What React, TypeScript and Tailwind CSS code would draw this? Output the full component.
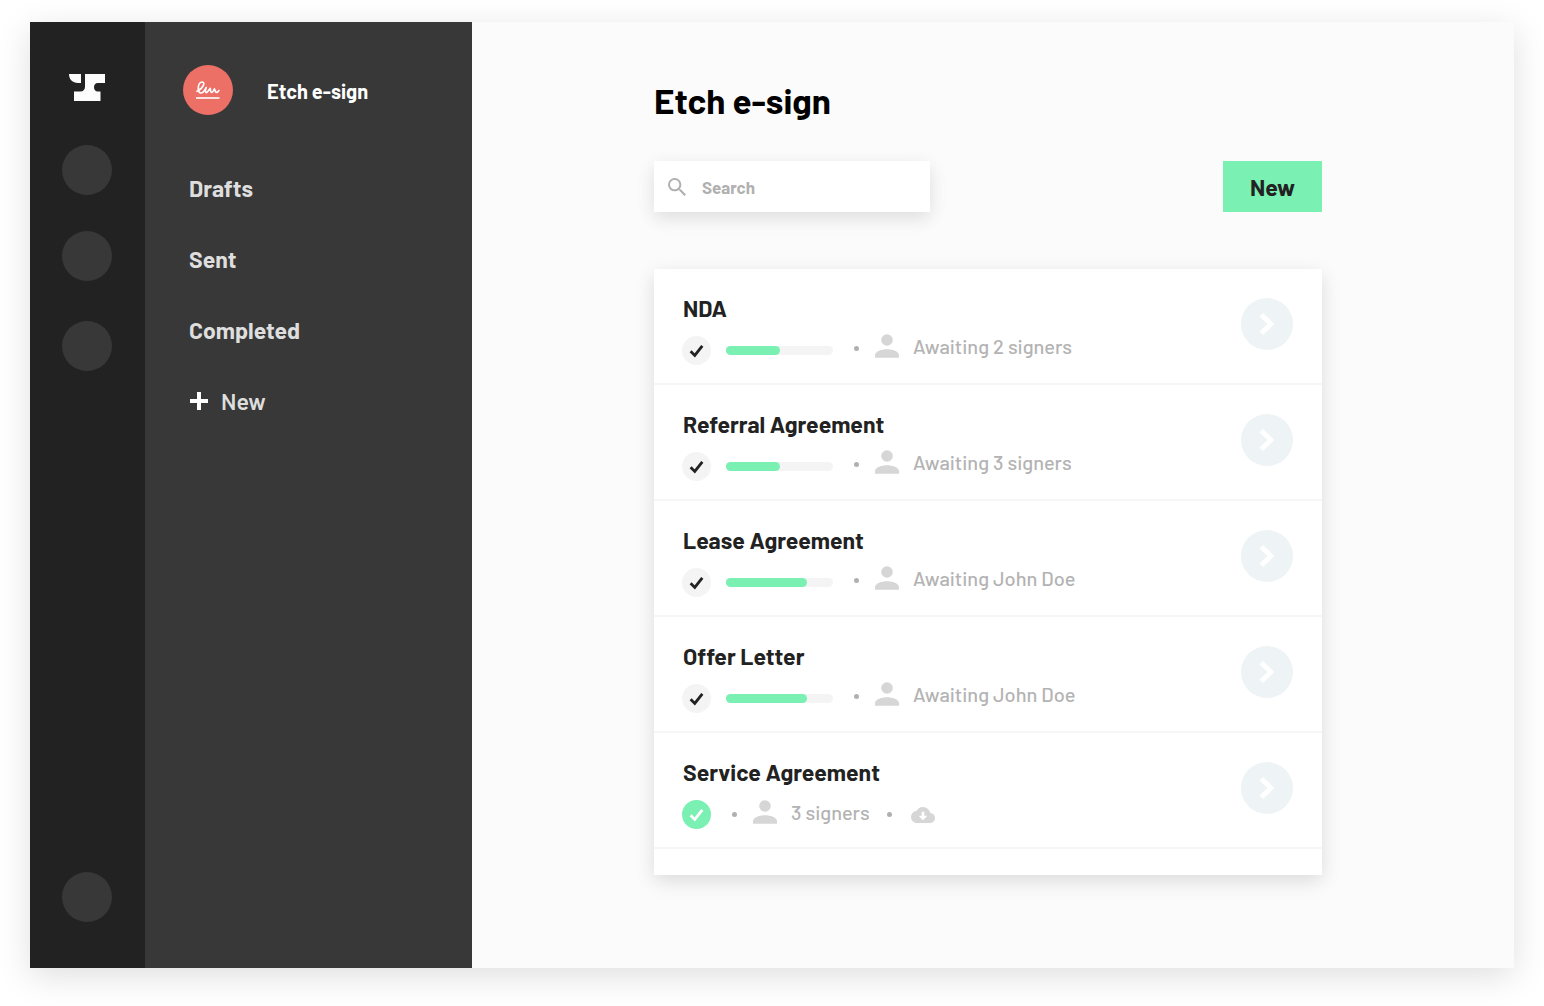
import React from "react";

type Agreement = {
  title: string;
  status: string;
  progress?: number;
};

const agreements: Agreement[] = [
  { title: "NDA", status: "Awaiting 2 signers", progress: 50 },
  { title: "Referral Agreement", status: "Awaiting 3 signers", progress: 50 },
  { title: "Lease Agreement", status: "Awaiting John Doe", progress: 76 },
  { title: "Offer Letter", status: "Awaiting John Doe", progress: 76 },
  { title: "Service Agreement", status: "3 signers" },
];

function Logo() {
  return (
    <svg width="36" height="27" viewBox="0 0 36 27" fill="#fcfcfc" aria-hidden="true">
      <path d="M0 0H12V9H9C3.5 9 0 5.5 0 0Z" />
      <path d="M16 0H36V9H28.8C26.4 9 25 10.8 25 13.2S26.4 17.5 28.8 17.5H31.5V27H5V17.5H11.2C14.2 17.5 16 15.8 16 12.8Z" />
    </svg>
  );
}

function SignatureIcon() {
  return (
    <svg width="24" height="18" viewBox="0 0 24 18" fill="none" stroke="#fff" strokeLinecap="round" strokeLinejoin="round" aria-hidden="true">
      <path
        strokeWidth="1.7"
        d="M1 10.2C3.8 9.2 7.8 5.4 7.8 2.8C7.8 1.5 6.9 .9 5.9 1C3.4 1.2 2.2 4.8 2.3 7.8C2.4 10.4 3.2 12 4.9 12C7.2 12 8.8 9.2 10.2 6.6C9.5 8.8 9.1 11 10 11.5C11.3 12 12.8 9 14.2 7.4C14.6 9 14.2 11.3 15.5 11.5C16.8 11.6 17.5 9.4 18.5 7.9C18.9 9.6 19.2 11.3 20.5 11.4C21.7 11.4 22.3 10.5 22.8 9.6"
      />
      <path strokeWidth="1.6" strokeLinecap="butt" d="M0 17H23.5" />
    </svg>
  );
}

function PersonIcon() {
  return (
    <svg className="shrink-0" width="24" height="24" viewBox="0 0 24 24" fill="#d6d6d6" aria-hidden="true">
      <circle cx="12" cy="6" r="5.8" />
      <path d="M0 23.7V21.2C0 17.2 7 15.2 12 15.2S24 17.2 24 21.2V23.7Z" />
    </svg>
  );
}

function CloudIcon() {
  return (
    <svg width="24" height="16" viewBox="0 4 24 16" aria-hidden="true">
      <path
        fill="#d6d6d6"
        d="M19.35 10.04A7.49 7.49 0 0 0 12 4C9.11 4 6.6 5.64 5.35 8.04A5.994 5.994 0 0 0 0 14c0 3.31 2.69 6 6 6h13c2.76 0 5-2.24 5-5 0-2.64-2.05-4.78-4.65-4.96Z"
      />
      <path fill="#fff" d="M10.7 8.8H13.3V12.7H16.4L12 17.2L7.6 12.7H10.7Z" />
    </svg>
  );
}

function CheckBadge({ done }: { done: boolean }) {
  return (
    <span
      className={
        done
          ? "flex size-[29px] shrink-0 items-center justify-center rounded-full bg-[#7bf0b3] text-white"
          : "flex size-[29px] shrink-0 items-center justify-center rounded-full bg-[#f4f4f4] text-[#222]"
      }
    >
      <svg width="15" height="14" viewBox="0 0 15 14" fill="none" stroke="currentColor" strokeWidth="2.8" aria-hidden="true">
        <path d="M1.6 7.2L5.8 11.4L13.3 1.8" />
      </svg>
    </span>
  );
}

function Dot() {
  return <span className="size-[5px] shrink-0 rounded-full bg-[#b0b0b0]" />;
}

function Row({ item }: { item: Agreement }) {
  const done = item.progress === undefined;
  return (
    <li className="flex h-[116px] items-start justify-between border-b-2 border-[#f6f6f6] pr-[29px] pl-7">
      <div className="pt-[25px]">
        <h2 className="pl-px text-[23px] leading-7 font-bold text-[#222]">{item.title}</h2>
        <div className="mt-3.5 flex h-[29px] items-center">
          <CheckBadge done={done} />
          {!done && (
            <div
              role="progressbar"
              aria-label={item.title + " progress"}
              aria-valuenow={item.progress}
              className="ml-[15px] h-[9px] w-[107px] shrink-0 rounded-full bg-[#f4f4f4]"
            >
              <div className="h-full rounded-full bg-[#7bf0b3]" style={{ width: item.progress + "%" }} />
            </div>
          )}
          <div className={done ? "ml-[21px] flex items-center" : "ml-[21px] flex items-center pb-1"}>
            <Dot />
            <div className="mr-3.5 ml-4 pb-1.5">
              <PersonIcon />
            </div>
            <span className="pb-1.5 text-[20px] leading-6 font-medium whitespace-nowrap text-[#b3b3b3]">{item.status}</span>
            {done && (
              <div className="flex items-center gap-[19px] pl-[17px]">
                <Dot />
                <button type="button" aria-label="Download">
                  <CloudIcon />
                </button>
              </div>
            )}
          </div>
        </div>
      </div>
      <button
        type="button"
        aria-label={"Open " + item.title}
        className="mt-[29px] flex size-[52px] shrink-0 items-center justify-center rounded-full bg-[#eef4f6]"
      >
        <svg width="16" height="24" viewBox="0 0 16 24" fill="none" stroke="#fff" strokeWidth="4.8" aria-hidden="true">
          <path d="M2.3 2.6L11.9 12L2.3 21.4" />
        </svg>
      </button>
    </li>
  );
}

export default function App() {
  return (
    <div className="flex min-h-screen bg-white px-[30px] pt-[22px] pb-[38px] font-['Barlow','Roboto',sans-serif]">
      <div className="flex flex-1 bg-[#fbfbfb] shadow-[0_8px_32px_rgba(0,0,0,0.13)]">
        <nav aria-label="Products" className="flex w-[115px] shrink-0 flex-col items-center bg-[#222] pt-[52px] pr-0.5 pb-[46px]">
          <a href="#home" aria-label="Home">
            <Logo />
          </a>
          <button type="button" aria-label="Product one" className="mt-11 size-[50px] rounded-full bg-[#383838]" />
          <button type="button" aria-label="Product two" className="mt-9 size-[50px] rounded-full bg-[#383838]" />
          <button type="button" aria-label="Product three" className="mt-10 size-[50px] rounded-full bg-[#383838]" />
          <button type="button" aria-label="Account" className="mt-auto size-[50px] rounded-full bg-[#383838]" />
        </nav>

        <aside className="w-[327px] shrink-0 bg-[#383838] pt-[43px] pl-[38px]">
          <div className="flex items-center gap-[34px]">
            <span className="flex size-[50px] items-center justify-center rounded-full bg-[#ed7067]">
              <SignatureIcon />
            </span>
            <span className="pt-0.5 text-[20px] leading-6 font-bold text-white">Etch e-sign</span>
          </div>
          <ul className="mt-[59px] flex flex-col gap-[43px] pl-1.5 text-[23px] leading-7 font-bold text-[#dedede]">
            <li><a href="#drafts">Drafts</a></li>
            <li><a href="#sent">Sent</a></li>
            <li><a href="#completed">Completed</a></li>
            <li>
              <button type="button" className="flex items-center gap-3 font-semibold">
                <svg width="20" height="18" viewBox="0 0 20 18" stroke="#fff" strokeWidth="4" aria-hidden="true">
                  <path d="M1 9H19M10 0V18" />
                </svg>
                New
              </button>
            </li>
          </ul>
        </aside>

        <main className="min-w-0 flex-1 pt-[58px] pr-[192px] pb-[93px] pl-[182px]">
          <h1 className="text-[35px] leading-10 font-bold text-black">Etch e-sign</h1>
          <div className="mt-[41px] flex justify-between">
            <label className="flex h-[51px] w-[276px] items-center gap-4 bg-white px-3.5 shadow-[0_6px_18px_rgba(0,0,0,0.12)]">
              <svg className="shrink-0" width="18" height="18" viewBox="3 3 17.5 17.5" fill="#b0b0b0" aria-hidden="true">
                <path d="M15.5 14h-.79l-.28-.27A6.471 6.471 0 0 0 16 9.5 6.5 6.5 0 1 0 9.5 16c1.61 0 3.09-.59 4.23-1.57l.27.28v.79l5 4.99L20.49 19l-4.99-5zm-6 0C7.01 14 5 11.99 5 9.5S7.01 5 9.5 5 14 7.01 14 9.5 11.99 14 9.5 14z" />
              </svg>
              <input
                type="search"
                aria-label="Search"
                placeholder="Search"
                className="w-full min-w-0 bg-transparent pt-0.5 text-[17px] font-bold outline-none placeholder:text-[#b0b0b0]"
              />
            </label>
            <button type="button" className="h-[51px] w-[99px] bg-[#7bf0b3] pt-0.5 text-[23px] font-bold text-[#222]">
              New
            </button>
          </div>
          <ul className="mt-[57px] bg-white pb-[26px] shadow-[0_6px_18px_rgba(0,0,0,0.13)]">
            {agreements.map((item) => (
              <Row key={item.title} item={item} />
            ))}
          </ul>
        </main>
      </div>
    </div>
  );
}
